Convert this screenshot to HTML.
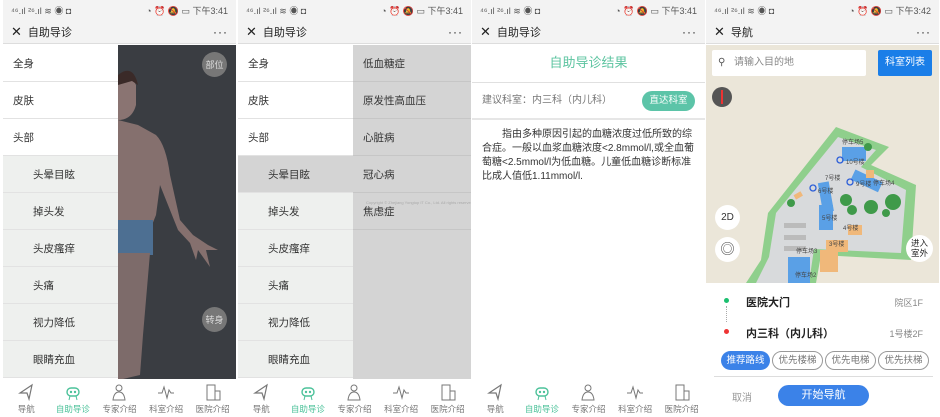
<!DOCTYPE html><html><head><meta charset="utf-8"><style>
*{margin:0;padding:0;box-sizing:border-box}
body{width:940px;height:417px;background:#fff;position:relative;overflow:hidden;font-family:"Liberation Sans","Noto Sans CJK SC",sans-serif;color:#333}
.s{position:absolute;top:0;width:233px;height:417px;background:#fff;overflow:hidden}
.sb{height:20px;background:#f3f3f3;font-size:9px;color:#555;display:flex;justify-content:space-between;align-items:center;padding:0 8px}
.hd{height:24px;background:#f3f3f3;border-bottom:1px solid #ddd;font-size:11px;display:flex;align-items:center;padding:0 8px;color:#222}
.hd .x{font-size:13px;margin-right:6px}.hd .d{margin-left:auto;font-size:12px;letter-spacing:1px}
.row{position:absolute;height:37px;font-size:10.5px;display:flex;align-items:center;border-bottom:1px solid #e2e2e2}
.tb{position:absolute;left:0;top:379px;width:233px;height:38px;display:flex;background:#fff}
.tb div{flex:1;text-align:center;font-size:8.5px;color:#777;padding-top:24px;position:relative}
.tb div.a{color:#4cc29a}
.tb svg{position:absolute;left:50%;top:4px;margin-left:-9px}
.bub{position:absolute;width:25px;height:25px;border-radius:50%;background:#777;color:#ddd;font-size:9px;display:flex;align-items:center;justify-content:center}
.ml{position:absolute;font-size:6px;color:#444;white-space:nowrap}
</style></head><body>

<!-- Screen 1 -->
<div class="s" style="left:3px">
<div class="sb"><span>⁴⁶.ıl ²⁶.ıl ≋ ◉ ◘</span><span>◔ ⏰ 🔕 ▭ 下午3:41</span></div>
<div class="hd"><span class="x">✕</span>自助导诊<span class="d">···</span></div>
<div style="position:absolute;left:115px;top:45px;width:118px;height:334px;background:#3a3d42">
<svg width="118" height="334" viewBox="0 0 118 334"><path d="M0 75 L20 80 L38 90 Q48 100 52 130 L62 175 L75 190 L90 200 L100 205 L88 205 L92 222 L80 205 L78 215 L72 198 L60 185 L42 140 L38 170 L30 190 L0 190 Z" fill="#85706e"/><path d="M0 30 Q12 25 18 40 L18 60 Q14 75 0 75Z" fill="#8a7472"/><path d="M0 30 Q15 18 20 40 L14 36 L0 40Z" fill="#3a2a28"/><rect x="0" y="175" width="35" height="35" fill="#4d6f92"/><path d="M0 208 L32 208 L25 290 L22 330 L5 334 L0 334Z" fill="#7d6b6a"/></svg>
<div class="bub" style="left:84px;top:7px">部位</div>
<div class="bub" style="left:84px;top:262px">转身</div>
</div>
<div class="row" style="left:0;top:45px;width:115px;padding-left:10px">全身</div>
<div class="row" style="left:0;top:82px;width:115px;padding-left:10px">皮肤</div>
<div class="row" style="left:0;top:119px;width:115px;padding-left:10px">头部</div>
<div class="row" style="left:0;top:156px;width:115px;padding-left:30px;background:#eef0ee">头晕目眩</div>
<div class="row" style="left:0;top:193px;width:115px;padding-left:30px;background:#eef0ee">掉头发</div>
<div class="row" style="left:0;top:230px;width:115px;padding-left:30px;background:#eef0ee">头皮瘙痒</div>
<div class="row" style="left:0;top:267px;width:115px;padding-left:30px;background:#eef0ee">头痛</div>
<div class="row" style="left:0;top:304px;width:115px;padding-left:30px;background:#eef0ee">视力降低</div>
<div class="row" style="left:0;top:341px;width:115px;padding-left:30px;background:#eef0ee">眼睛充血</div>
<div class="tb">
<div><svg width="18" height="18"><path d="M15 2 L3 10 L10 10 L12 16 Z" fill="none" stroke="#777" stroke-width="1.2"/></svg>导航</div>
<div class="a"><svg width="18" height="18"><rect x="3" y="5" width="12" height="8" rx="4" fill="none" stroke="#4cc29a" stroke-width="1.4"/><circle cx="7" cy="9" r="1.2" fill="#4cc29a"/><circle cx="11" cy="9" r="1.2" fill="#4cc29a"/><path d="M6 13 L5 17 M12 13 L13 17" stroke="#4cc29a"/></svg>自助导诊</div>
<div><svg width="18" height="18"><circle cx="9" cy="5" r="3" fill="none" stroke="#777"/><path d="M3 17 Q4 9 9 9 Q14 9 15 17Z" fill="none" stroke="#777"/></svg>专家介绍</div>
<div><svg width="18" height="18"><path d="M1 10 L5 10 L7 4 L10 15 L12 7 L14 10 L17 10" fill="none" stroke="#777"/></svg>科室介绍</div>
<div><svg width="18" height="18"><rect x="3" y="2" width="8" height="15" fill="none" stroke="#777"/><rect x="11" y="8" width="5" height="9" fill="none" stroke="#777"/></svg>医院介绍</div>
</div>
</div>

<!-- Screen 2 -->
<div class="s" style="left:238px">
<div class="sb"><span>⁴⁶.ıl ²⁶.ıl ≋ ◉ ◘</span><span>◔ ⏰ 🔕 ▭ 下午3:41</span></div>
<div class="hd"><span class="x">✕</span>自助导诊<span class="d">···</span></div>
<div style="position:absolute;left:115px;top:45px;width:118px;height:334px;background:#d4d4d4"></div>
<div class="row" style="left:115px;top:45px;width:118px;padding-left:10px;border-color:#c6c6c6">低血糖症</div>
<div class="row" style="left:115px;top:82px;width:118px;padding-left:10px;border-color:#c6c6c6">原发性高血压</div>
<div class="row" style="left:115px;top:119px;width:118px;padding-left:10px;border-color:#c6c6c6">心脏病</div>
<div class="row" style="left:115px;top:156px;width:118px;padding-left:10px;border-color:#c6c6c6">冠心病</div>
<div class="row" style="left:115px;top:193px;width:118px;padding-left:10px;border-color:#c6c6c6">焦虑症</div>
<div class="row" style="left:0;top:45px;width:115px;padding-left:10px">全身</div>
<div class="row" style="left:0;top:82px;width:115px;padding-left:10px">皮肤</div>
<div class="row" style="left:0;top:119px;width:115px;padding-left:10px">头部</div>
<div class="row" style="left:0;top:156px;width:115px;padding-left:30px;background:#d4d4d4">头晕目眩</div>
<div class="row" style="left:0;top:193px;width:115px;padding-left:30px;background:#eef0ee">掉头发</div>
<div class="row" style="left:0;top:230px;width:115px;padding-left:30px;background:#eef0ee">头皮瘙痒</div>
<div class="row" style="left:0;top:267px;width:115px;padding-left:30px;background:#eef0ee">头痛</div>
<div class="row" style="left:0;top:304px;width:115px;padding-left:30px;background:#eef0ee">视力降低</div>
<div class="row" style="left:0;top:341px;width:115px;padding-left:30px;background:#eef0ee">眼睛充血</div>
<div style="position:absolute;left:128px;top:200px;font-size:4px;color:#aaa;white-space:nowrap">Copyright © Zhejiang Yongtop IT Co., Ltd. All rights reserved</div>
<div class="tb">
<div><svg width="18" height="18"><path d="M15 2 L3 10 L10 10 L12 16 Z" fill="none" stroke="#777" stroke-width="1.2"/></svg>导航</div>
<div class="a"><svg width="18" height="18"><rect x="3" y="5" width="12" height="8" rx="4" fill="none" stroke="#4cc29a" stroke-width="1.4"/><circle cx="7" cy="9" r="1.2" fill="#4cc29a"/><circle cx="11" cy="9" r="1.2" fill="#4cc29a"/><path d="M6 13 L5 17 M12 13 L13 17" stroke="#4cc29a"/></svg>自助导诊</div>
<div><svg width="18" height="18"><circle cx="9" cy="5" r="3" fill="none" stroke="#777"/><path d="M3 17 Q4 9 9 9 Q14 9 15 17Z" fill="none" stroke="#777"/></svg>专家介绍</div>
<div><svg width="18" height="18"><path d="M1 10 L5 10 L7 4 L10 15 L12 7 L14 10 L17 10" fill="none" stroke="#777"/></svg>科室介绍</div>
<div><svg width="18" height="18"><rect x="3" y="2" width="8" height="15" fill="none" stroke="#777"/><rect x="11" y="8" width="5" height="9" fill="none" stroke="#777"/></svg>医院介绍</div>
</div>
</div>

<!-- Screen 3 -->
<div class="s" style="left:472px">
<div class="sb"><span>⁴⁶.ıl ²⁶.ıl ≋ ◉ ◘</span><span>◔ ⏰ 🔕 ▭ 下午3:41</span></div>
<div class="hd"><span class="x">✕</span>自助导诊<span class="d">···</span></div>
<div style="position:absolute;left:0;top:45px;width:233px;height:38px;border-bottom:1px solid #e0e0e0;text-align:center;line-height:36px;font-size:13px;color:#5cc4a0">自助导诊结果</div>
<div style="position:absolute;left:0;top:84px;width:233px;height:36px;border-bottom:2px solid #e6e6e6;font-size:10px;color:#777;padding-left:10px;line-height:34px">建议科室：内三科（内儿科）<span style="position:absolute;right:10px;top:7px;width:53px;height:20px;border-radius:10px;background:#5cc4a8;color:#fff;font-size:9.5px;line-height:20px;text-align:center">直达科室</span></div>
<div style="position:absolute;left:10px;top:128px;width:216px;font-size:10px;line-height:14px;color:#333;text-indent:20px">指由多种原因引起的血糖浓度过低所致的综合症。一般以血浆血糖浓度&lt;2.8mmol/l,或全血葡萄糖&lt;2.5mmol/l为低血糖。儿童低血糖诊断标准比成人值低1.11mmol/l.</div>
<div class="tb">
<div><svg width="18" height="18"><path d="M15 2 L3 10 L10 10 L12 16 Z" fill="none" stroke="#777" stroke-width="1.2"/></svg>导航</div>
<div class="a"><svg width="18" height="18"><rect x="3" y="5" width="12" height="8" rx="4" fill="none" stroke="#4cc29a" stroke-width="1.4"/><circle cx="7" cy="9" r="1.2" fill="#4cc29a"/><circle cx="11" cy="9" r="1.2" fill="#4cc29a"/><path d="M6 13 L5 17 M12 13 L13 17" stroke="#4cc29a"/></svg>自助导诊</div>
<div><svg width="18" height="18"><circle cx="9" cy="5" r="3" fill="none" stroke="#777"/><path d="M3 17 Q4 9 9 9 Q14 9 15 17Z" fill="none" stroke="#777"/></svg>专家介绍</div>
<div><svg width="18" height="18"><path d="M1 10 L5 10 L7 4 L10 15 L12 7 L14 10 L17 10" fill="none" stroke="#777"/></svg>科室介绍</div>
<div><svg width="18" height="18"><rect x="3" y="2" width="8" height="15" fill="none" stroke="#777"/><rect x="11" y="8" width="5" height="9" fill="none" stroke="#777"/></svg>医院介绍</div>
</div>
</div>

<!-- Screen 4 -->
<div class="s" style="left:706px">
<div class="sb"><span>⁴⁶.ıl ²⁶.ıl ≋ ◉ ◘</span><span>◔ ⏰ 🔕 ▭ 下午3:42</span></div>
<div class="hd"><span class="x">✕</span>导航<span class="d">···</span></div>
<div style="position:absolute;left:0;top:45px;width:233px;height:238px;background:#ebe6d9">
<svg width="233" height="238" viewBox="0 0 233 238" style="position:absolute;left:0;top:0"><path d="M62 168 L130 82 L183 102 L165 120 L210 140 L205 215 L115 210 L110 238 L40 238 L55 215 Z" fill="#8fcf8c"/><path d="M70 168 L132 92 L170 105 L155 122 L200 145 L195 208 L108 204 L103 238 L50 238 L63 212 Z" fill="#d8dadc"/>
<rect x="136" y="102" width="24" height="14" fill="#5aa0e6"/><rect x="114" y="137" width="11" height="30" fill="#5aa0e6" transform="rotate(-10 120 150)"/><rect x="146" y="130" width="30" height="11" fill="#5aa0e6" transform="rotate(25 160 135)"/><rect x="113" y="160" width="14" height="25" fill="#5aa0e6"/>
<rect x="114" y="205" width="18" height="22" fill="#f0b87a"/><rect x="120" y="195" width="22" height="12" fill="#f0b87a"/><rect x="142" y="180" width="14" height="10" fill="#f0b87a"/><rect x="118" y="190" width="0" height="0"/>
<rect x="116" y="155" width="0" height="0"/><rect x="118" y="200" width="0" height="0"/>
<rect x="116" y="208" width="0" height="0"/>
<rect x="82" y="212" width="22" height="26" fill="#5aa0e6"/>
<rect x="160" y="125" width="8" height="8" fill="#f0b87a"/><rect x="88" y="148" width="8" height="5" fill="#f0b87a" transform="rotate(-30 92 150)"/>
<rect x="78" y="178" width="22" height="5" fill="#bbb"/><rect x="78" y="190" width="22" height="5" fill="#bbb"/><rect x="78" y="201" width="22" height="5" fill="#bbb"/>
<circle cx="140" cy="155" r="6" fill="#3f9a4a"/><circle cx="146" cy="165" r="5" fill="#3f9a4a"/><circle cx="165" cy="162" r="7" fill="#3f9a4a"/><circle cx="187" cy="157" r="8" fill="#3f9a4a"/><circle cx="180" cy="168" r="4" fill="#3f9a4a"/><circle cx="162" cy="102" r="4" fill="#3f9a4a"/><circle cx="85" cy="158" r="4" fill="#3f9a4a"/>
<circle cx="134" cy="115" r="3" fill="none" stroke="#2b5ed8" stroke-width="1.3"/><circle cx="107" cy="143" r="3" fill="none" stroke="#2b5ed8" stroke-width="1.3"/><circle cx="144" cy="137" r="3" fill="none" stroke="#2b5ed8" stroke-width="1.3"/></svg>
<span class="ml" style="left:136px;top:92px">停车场5</span><span class="ml" style="left:140px;top:112px">10号楼</span><span class="ml" style="left:119px;top:128px">7号楼</span><span class="ml" style="left:112px;top:141px">6号楼</span><span class="ml" style="left:150px;top:134px">9号楼</span><span class="ml" style="left:167px;top:133px">停车场4</span><span class="ml" style="left:116px;top:168px">5号楼</span><span class="ml" style="left:137px;top:178px">4号楼</span><span class="ml" style="left:123px;top:194px">3号楼</span><span class="ml" style="left:90px;top:201px">停车场3</span><span class="ml" style="left:89px;top:225px">停车场2</span>
<div style="position:absolute;left:6px;top:5px;width:154px;height:26px;background:#fff;border-radius:2px;font-size:10px;color:#888;line-height:26px;padding-left:22px">请输入目的地<span style="position:absolute;left:6px;top:0;color:#555">⚲</span></div>
<div style="position:absolute;left:172px;top:5px;width:54px;height:26px;background:#1a7ee8;border-radius:2px;color:#fff;font-size:10px;text-align:center;line-height:26px">科室列表</div>
<div style="position:absolute;left:6px;top:42px;width:20px;height:20px;border-radius:50%;background:#555"><div style="position:absolute;left:9px;top:3px;width:2px;height:14px;background:#e33"></div></div>
<div style="position:absolute;left:9px;top:160px;width:25px;height:25px;border-radius:50%;background:#fff;font-size:10px;text-align:center;line-height:25px">2D</div>
<div style="position:absolute;left:9px;top:192px;width:25px;height:25px;border-radius:50%;background:#fff;font-size:14px;text-align:center;line-height:25px;color:#444">◎</div>
<div style="position:absolute;left:200px;top:190px;width:27px;height:27px;border-radius:50%;background:#fff;font-size:8.5px;text-align:center;line-height:10px;padding-top:3px;color:#222">进入<br>室外</div>
</div>
<div style="position:absolute;left:18px;top:298px;width:5px;height:5px;border-radius:50%;background:#1bbf6f"></div>
<div style="position:absolute;left:20px;top:306px;width:1px;height:16px;border-left:1px dotted #aaa"></div>
<div style="position:absolute;left:18px;top:329px;width:5px;height:5px;border-radius:50%;background:#e33"></div>
<div style="position:absolute;left:40px;top:294px;font-size:11px;font-weight:bold;color:#222">医院大门</div>
<div style="position:absolute;right:16px;top:296px;font-size:9px;color:#888">院区1F</div>
<div style="position:absolute;left:40px;top:325px;font-size:11px;font-weight:bold;color:#222">内三科（内儿科）</div>
<div style="position:absolute;right:16px;top:327px;font-size:9px;color:#888">1号楼2F</div>
<div style="position:absolute;left:15px;top:351px;display:flex;gap:2px">
<span style="width:49px;height:19px;border-radius:10px;background:#3b82e8;color:#fff;font-size:9.5px;text-align:center;line-height:19px">推荐路线</span>
<span style="width:51px;height:19px;border-radius:10px;border:1px solid #999;color:#777;font-size:9.5px;text-align:center;line-height:17px">优先楼梯</span>
<span style="width:51px;height:19px;border-radius:10px;border:1px solid #999;color:#777;font-size:9.5px;text-align:center;line-height:17px">优先电梯</span>
<span style="width:51px;height:19px;border-radius:10px;border:1px solid #999;color:#777;font-size:9.5px;text-align:center;line-height:17px">优先扶梯</span>
</div>
<div style="position:absolute;left:8px;top:376px;width:219px;border-top:1px solid #ddd"></div>
<div style="position:absolute;left:26px;top:389px;font-size:10px;color:#999">取消</div>
<div style="position:absolute;left:72px;top:385px;width:91px;height:21px;border-radius:11px;background:#3b82e8;color:#fff;font-size:11px;text-align:center;line-height:21px">开始导航</div>
</div>
</body></html>
